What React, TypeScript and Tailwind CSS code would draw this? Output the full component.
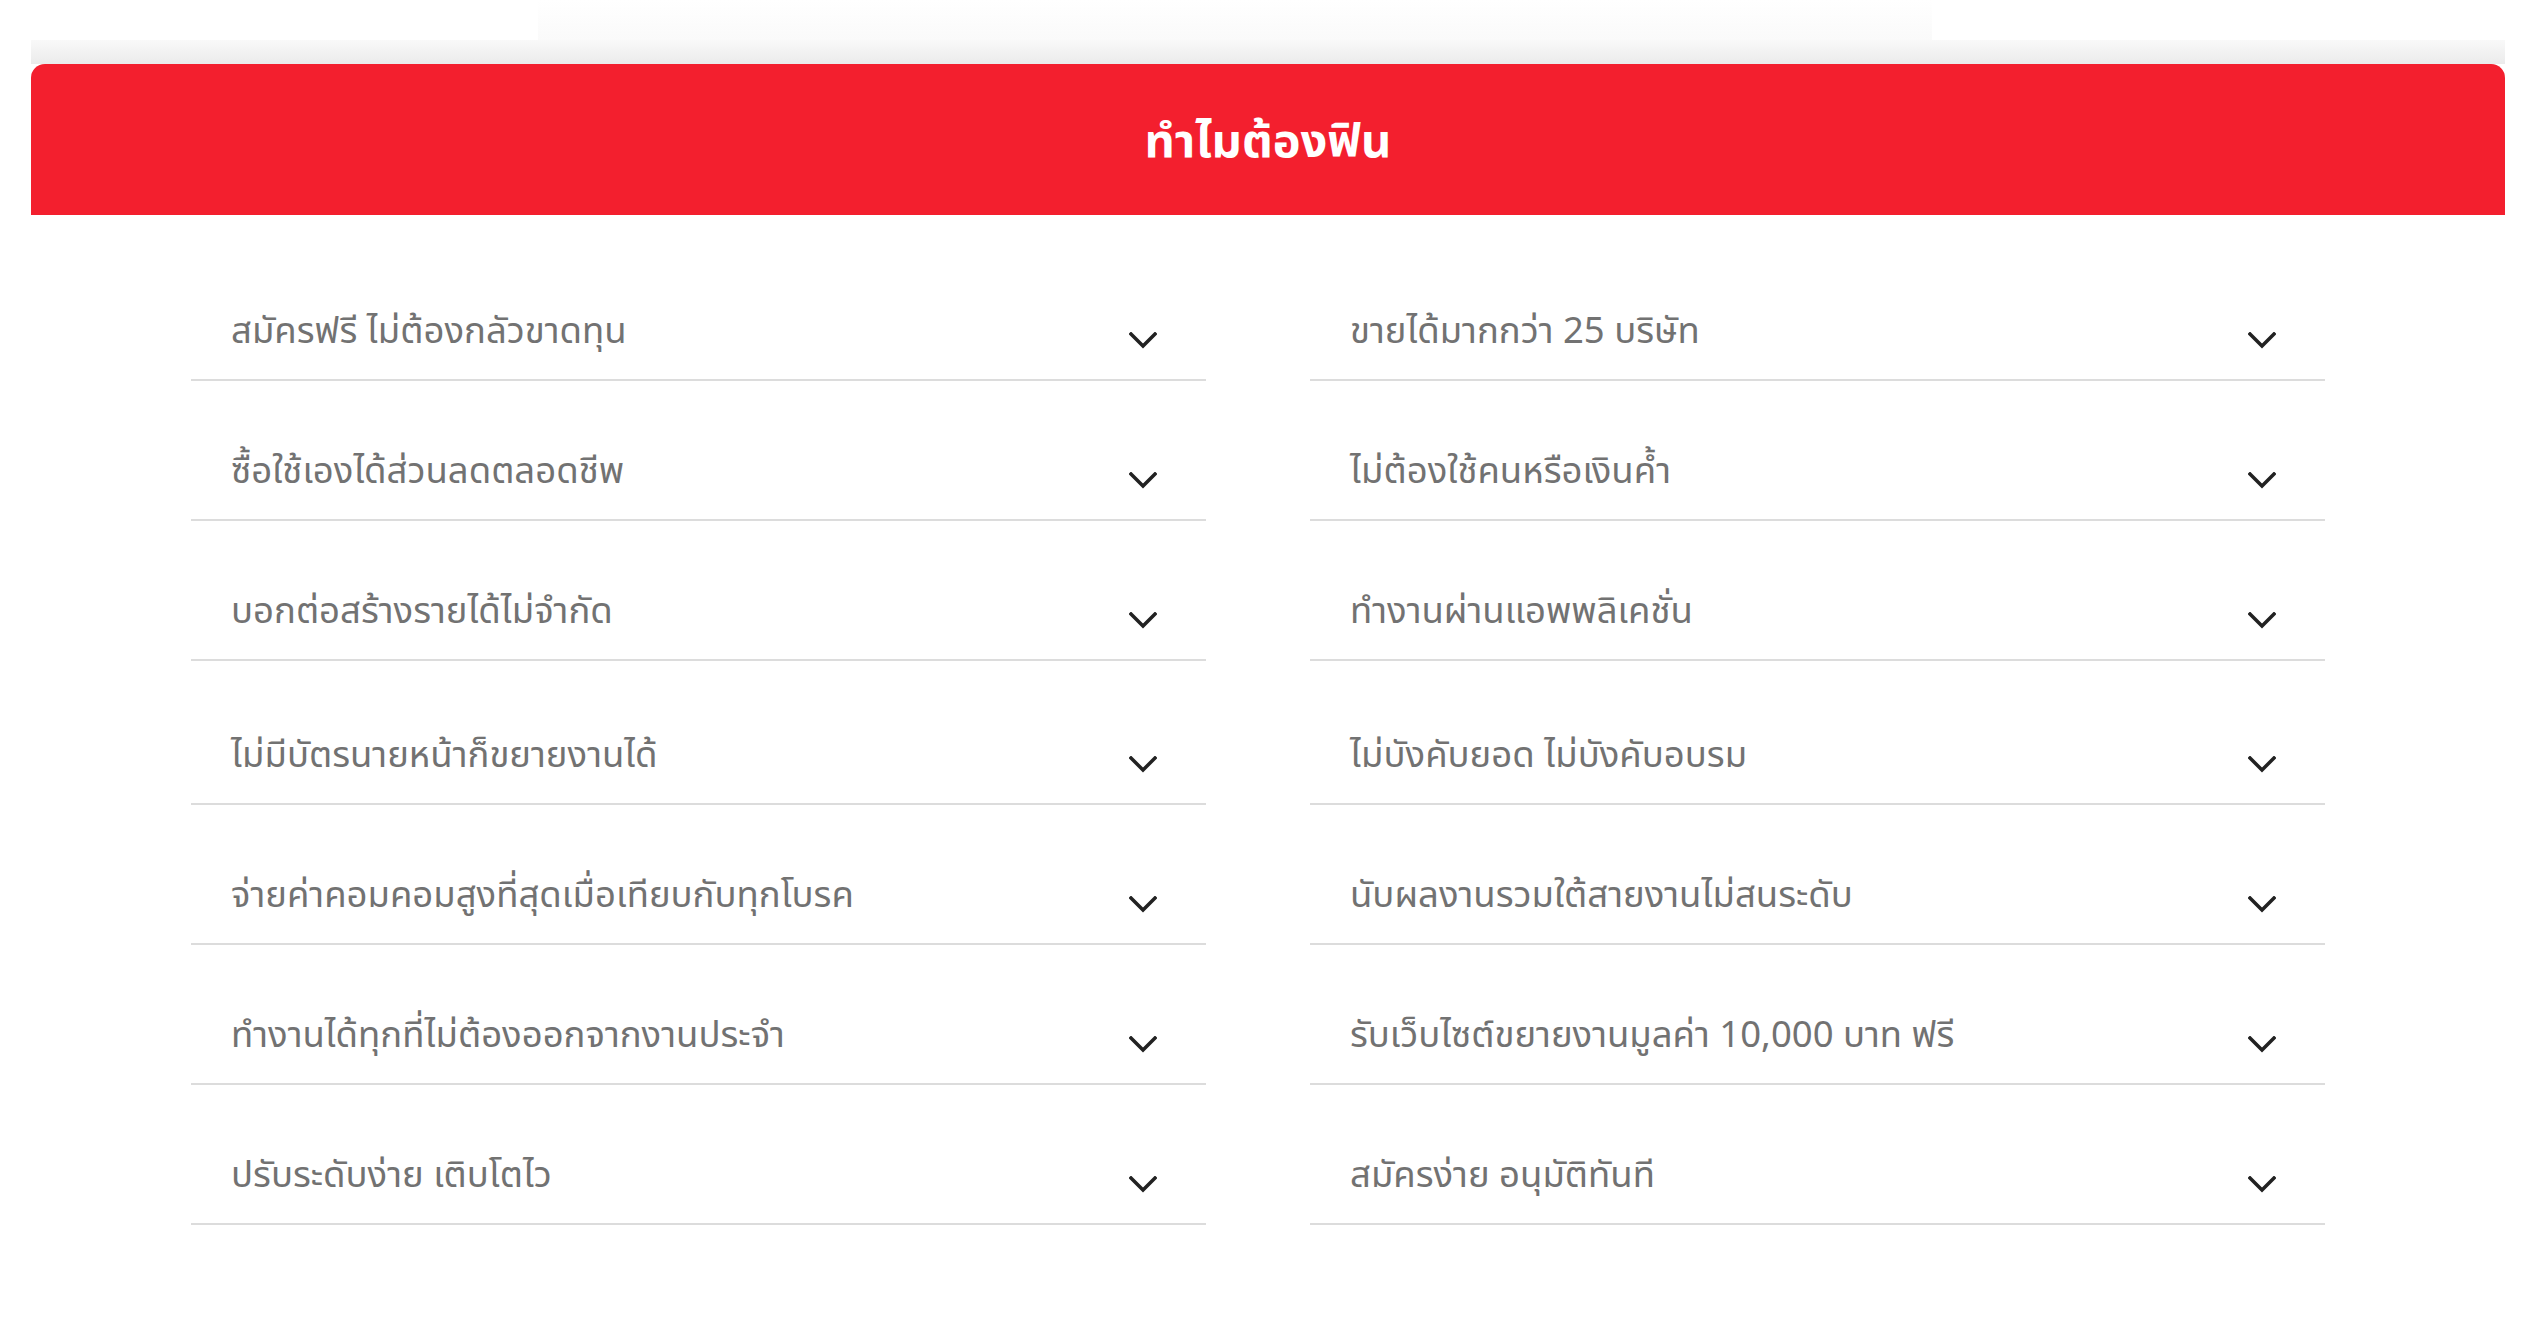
const left = [
  "สมัครฟรี ไม่ต้องกลัวขาดทุน",
  "ซื้อใช้เองได้ส่วนลดตลอดชีพ",
  "บอกต่อสร้างรายได้ไม่จำกัด",
  "ไม่มีบัตรนายหน้าก็ขยายงานได้",
  "จ่ายค่าคอมคอมสูงที่สุดเมื่อเทียบกับทุกโบรค",
  "ทำงานได้ทุกที่ไม่ต้องออกจากงานประจำ",
  "ปรับระดับง่าย เติบโตไว",
];

const right = [
  "ขายได้มากกว่า 25 บริษัท",
  "ไม่ต้องใช้คนหรือเงินค้ำ",
  "ทำงานผ่านแอพพลิเคชั่น",
  "ไม่บังคับยอด ไม่บังคับอบรม",
  "นับผลงานรวมใต้สายงานไม่สนระดับ",
  "รับเว็บไซต์ขยายงานมูลค่า 10,000 บาท ฟรี",
  "สมัครง่าย อนุมัติทันที",
];

function Chevron() {
  return (
    <svg width="28" height="17" viewBox="0 0 28 17" className="mt-[20px] shrink-0">
      <polyline
        points="2,2 14,14 26,2"
        fill="none"
        stroke="#222222"
        strokeWidth="3.5"
        strokeLinecap="square"
      />
    </svg>
  );
}

function Row({ label, tall }: { label: string; tall?: boolean }) {
  return (
    <button
      className={
        (tall ? "mt-[44px] " : "mt-[40px] ") +
        "flex h-[100px] w-full items-center justify-between border-b-2 border-[#dcdcdc] pl-[40px] pr-[49px] text-left"
      }
    >
      <span className="pt-[5px] text-[36.5px] leading-none text-[#727272]">{label}</span>
      <Chevron />
    </button>
  );
}

export default function App() {
  return (
    <div
      className="min-h-screen bg-white"
      style={{ fontFamily: '"Noto Sans Thai", "Noto Sans Thai UI", "Noto Sans", sans-serif' }}
    >
      <div className="h-[40px] pl-[538px]">
        <div className="h-full w-[1394px] bg-gradient-to-b from-white to-[#fafafa]" />
      </div>
      <div className="px-[31px]">
        <div className="h-[24px] bg-gradient-to-b from-[#f9f9f9] to-[#ebebeb]" />
        <div className="flex h-[151px] items-center justify-center rounded-t-[14px] bg-[#f31f2e] pt-[6px]">
          <h2 className="text-[47px] font-bold leading-none text-white">ทำไมต้องฟิน</h2>
        </div>
      </div>

      <section className="grid grid-cols-[1015px_1015px] gap-x-[104px] pl-[191px] pt-[26px]">
        <div className="flex flex-col">
          {left.map((item, i) => (
            <Row key={item} label={item} tall={i === 3} />
          ))}
        </div>
        <div className="flex flex-col">
          {right.map((item, i) => (
            <Row key={item} label={item} tall={i === 3} />
          ))}
        </div>
      </section>
    </div>
  );
}
